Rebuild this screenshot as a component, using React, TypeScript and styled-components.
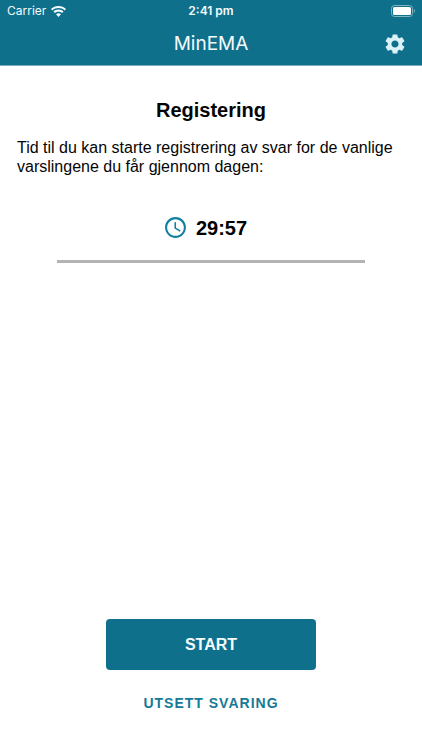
import React from 'react';
import styled, { createGlobalStyle } from 'styled-components';
import { MdAccessTime, MdSettings } from 'react-icons/md';

const GlobalStyle = createGlobalStyle`
  * { box-sizing: border-box; }
  body {
    margin: 0;
    background: #fff;
    color: #050505;
    font-family: 'Liberation Sans', Arial, sans-serif;
  }
`;

const Screen = styled.div`
  min-height: 100vh;
  display: flex;
  flex-direction: column;
`;

const Header = styled.header`
  background: #0f708c;
  color: #f4fbfd;
  font-family: Inter, sans-serif;
  border-bottom: 1px solid #77adbc;
`;

const StatusBar = styled.div`
  display: grid;
  grid-template-columns: 1fr auto 1fr;
  align-items: center;
  height: 22px;
  padding: 0 7px;
  font-size: 12px;
  line-height: 22px;
`;

const Carrier = styled.span`
  display: flex;
  align-items: center;
  gap: 5px;
`;

const Clock = styled.time`
  font-weight: 600;
`;

const BatteryIcon = styled.svg`
  justify-self: end;
`;

const NavBar = styled.div`
  display: grid;
  grid-template-columns: 1fr auto 1fr;
  align-items: center;
  height: 43px;
  padding: 0 15px;
`;

const AppTitle = styled.h1`
  grid-column: 2;
  margin: 0;
  font-size: 19px;
  line-height: 43px;
  font-weight: 400;
`;

const IconButton = styled.button`
  justify-self: end;
  display: flex;
  padding: 0;
  border: 0;
  background: none;
  color: #dcf1f6;
  cursor: pointer;
`;

const Content = styled.main`
  flex: 1;
  display: flex;
  flex-direction: column;
  align-items: center;
  padding: 32px 17px 34px;
`;

const Heading = styled.h2`
  margin: 0 0 16px;
  font-size: 20px;
  line-height: 24px;
  font-weight: 700;
`;

const Intro = styled.p`
  align-self: stretch;
  margin: 0;
  font-size: 16px;
  line-height: 19px;
`;

const Countdown = styled.div`
  display: flex;
  align-items: center;
  gap: 8px;
  margin-top: 39px;
  padding-right: 12px;
  font-size: 20px;
  line-height: 24px;
  font-weight: 700;
  color: #000;

  svg { color: #0f7f9f; }
`;

const Track = styled.div`
  align-self: stretch;
  height: 3px;
  margin: 20px 40px 0;
  background: #b3b3b3;
`;

const Actions = styled.div`
  align-self: stretch;
  display: flex;
  flex-direction: column;
  align-items: center;
  gap: 20px;
  margin-top: auto;
`;

const StartButton = styled.button`
  width: 54%;
  height: 51px;
  padding: 0;
  border: 0;
  border-radius: 4px;
  background: #0f708c;
  color: #f4fbfd;
  font: 700 16px 'Liberation Sans', Arial, sans-serif;
  cursor: pointer;
`;

const TextButton = styled.button`
  padding: 4px;
  border: 0;
  background: none;
  color: #157a97;
  font: 700 14px/18px 'Liberation Sans', Arial, sans-serif;
  letter-spacing: 1px;
  cursor: pointer;
`;

export default function App() {
  return (
    <Screen>
      <GlobalStyle />
      <Header>
        <StatusBar>
          <Carrier>
            Carrier
            <svg width="15" height="11" viewBox="0 0 15 11" fill="currentColor" aria-hidden="true">
              <path d="M7.5 0C4.6 0 2 1.1 0 2.9L1.4 4.4C3 2.9 5.1 2.1 7.5 2.1S12 2.9 13.6 4.4L15 2.9C13 1.1 10.4 0 7.5 0Z" />
              <path d="M7.5 3.6C5.6 3.6 3.9 4.3 2.5 5.5L3.9 7C4.9 6.2 6.1 5.7 7.5 5.7S10.1 6.2 11.1 7L12.5 5.5C11.1 4.3 9.4 3.6 7.5 3.6Z" />
              <path d="M7.5 7.2C6.5 7.2 5.7 7.6 5 8.2L7.5 11L10 8.2C9.3 7.6 8.5 7.2 7.5 7.2Z" />
            </svg>
          </Carrier>
          <Clock>2:41 pm</Clock>
          <BatteryIcon width="24" height="12" viewBox="0 0 24 12" aria-hidden="true">
            <rect x="0.5" y="0.5" width="21" height="11" rx="3" fill="none" stroke="#7eb5c4" />
            <rect x="2" y="2" width="18" height="8" rx="1.5" fill="#fff" />
            <path d="M22.8 4C24.2 4.5 24.2 7.5 22.8 8Z" fill="#7eb5c4" />
          </BatteryIcon>
        </StatusBar>
        <NavBar>
          <AppTitle>MinEMA</AppTitle>
          <IconButton type="button" aria-label="Innstillinger">
            <MdSettings size={24} />
          </IconButton>
        </NavBar>
      </Header>
      <Content>
        <Heading>Registering</Heading>
        <Intro>
          Tid til du kan starte registrering av svar for de vanlige varslingene du får gjennom dagen:
        </Intro>
        <Countdown>
          <MdAccessTime size={25} aria-hidden="true" />
          <span role="timer">29:57</span>
        </Countdown>
        <Track />
        <Actions>
          <StartButton type="button">START</StartButton>
          <TextButton type="button">UTSETT SVARING</TextButton>
        </Actions>
      </Content>
    </Screen>
  );
}
